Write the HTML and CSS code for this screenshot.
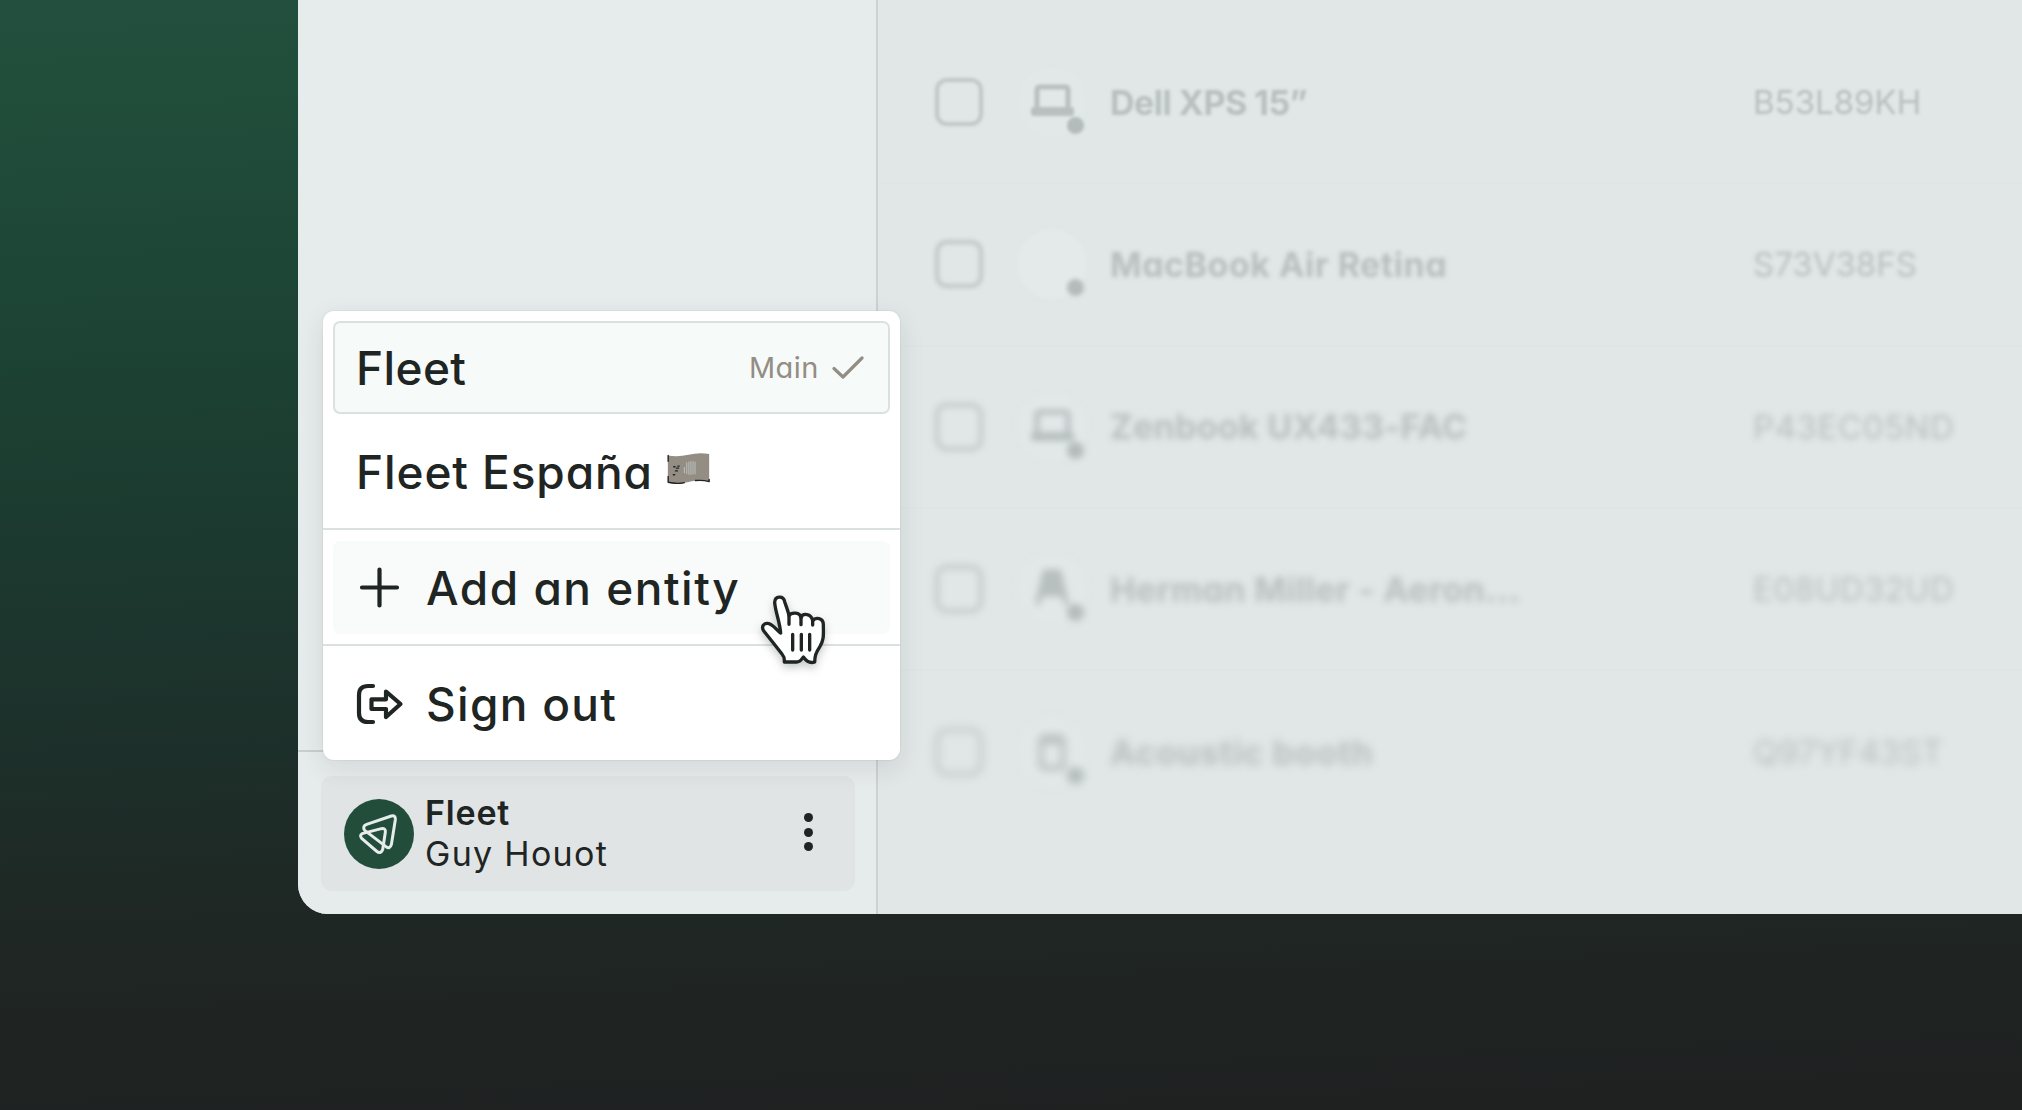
FILE: index.html
```html
<!DOCTYPE html>
<html lang="en">
<head>
  <meta charset="UTF-8" />
  <meta name="viewport" content="width=device-width, initial-scale=1.0" />
  <title>Fleet</title>
  <link rel="stylesheet" href="styles.css">
</head>
<body>
  <div class="app">
    <aside class="sidebar">
      <div class="sidebar-body"></div>
      <div class="sidebar-footer">
        <div class="account">
          <svg class="avatar" viewBox="0 0 210 210">
            <circle cx="105" cy="105" r="105" />
            <path d="M62 94 Q54 81 68 76 L142 51 Q155 48 154 62 L142 137 Q138 151 126 143 Z" />
            <path d="M54 104 L112 89 Q126 87 124 100 L116 152 Q110 167 97 156 L53 118 Q46 109 54 104 Z" />
          </svg>
          <div class="account-text">
            <div class="account-name">Fleet</div>
            <div class="account-user">Guy Houot</div>
          </div>
          <div class="dots"><span></span><span></span><span></span></div>
        </div>
      </div>
    </aside>

    <main class="table">
      <div class="row row-1">
        <span class="checkbox"></span>
        <span class="device">
          <svg viewBox="0 0 70 70"><path class="line" d="M20 41V23q0-3 3-3h25q3 0 3 3v18" /><rect x="14" y="40" width="43" height="9" rx="3" /></svg>
          <i></i>
        </span>
        <span class="name">Dell XPS 15”</span>
        <span class="serial">B53L89KH</span>
      </div>
      <div class="row row-2">
        <span class="checkbox"></span>
        <span class="device light"><i></i></span>
        <span class="name">MacBook Air Retina</span>
        <span class="serial">S73V38FS</span>
      </div>
      <div class="row row-3">
        <span class="checkbox"></span>
        <span class="device">
          <svg viewBox="0 0 70 70"><path class="line" d="M20 41V23q0-3 3-3h25q3 0 3 3v18" /><rect x="14" y="40" width="43" height="9" rx="3" /></svg>
          <i></i>
        </span>
        <span class="name">Zenbook UX433-FAC</span>
        <span class="serial">P43EC05ND</span>
      </div>
      <div class="row row-4">
        <span class="checkbox"></span>
        <span class="device">
          <svg viewBox="0 0 70 70"><path d="M28 16h14l5 24H23z" /><path class="line" d="M28 18h14l5 22H23zM23 38l-2 11M47 38l2 11" /></svg>
          <i></i>
        </span>
        <span class="name">Herman Miller - Aeron...</span>
        <span class="serial">E08UD32UD</span>
      </div>
      <div class="row row-5">
        <span class="checkbox"></span>
        <span class="device">
          <svg viewBox="0 0 70 70"><rect class="line" x="24" y="20" width="22" height="31" rx="3" /><rect x="27" y="18" width="16" height="9" /></svg>
          <i></i>
        </span>
        <span class="name">Acoustic booth</span>
        <span class="serial">Q97YF43ST</span>
      </div>
    </main>
  </div>

  <div class="menu">
    <div class="menu-group">
      <div class="item selected">
        <span>Fleet</span>
        <span class="tag">Main</span>
        <svg class="check" viewBox="0 0 32 24"><path d="M2 12.5 L11 21 L30 2" /></svg>
      </div>
      <div class="item">
        <span class="espana">Fleet España</span>
        <svg class="flag" viewBox="0 0 124 90">
          <path class="cloth" d="M2 7 Q32 12 62 5 Q94 -3 122 3 V83 Q94 76 62 84 Q32 92 2 84 Z" />
          <path class="edge" d="M3 7 V24 M3 68 V85 Q32 91 50 86 M82 80 Q104 78 122 83 V77" />
          <path class="arms" d="M57 28V60M63 26V62M69 25V62M75 25V61M81 26V60M50 42V57" />
          <path class="marks" d="M19 40h4M27 44h6M31 38h4M24 52h6M18 63h4" />
        </svg>
      </div>
    </div>
    <div class="menu-group">
      <div class="item hover">
        <svg class="icon" viewBox="0 0 48 44"><path d="M23.5 3.500V39.500M6 21.500H41" /></svg>
        <span class="entity">Add an entity</span>
      </div>
    </div>
    <div class="menu-group">
      <div class="item">
        <svg class="icon" viewBox="0 0 48 44"><path d="M17 4H12Q3 4 3 13V31Q3 40 12 40H17M15.500 17.300H30V9.500L44.500 22L30 35V27H15.500Z" /></svg>
        <span class="signout">Sign out</span>
      </div>
    </div>
  </div>

  <svg class="cursor" viewBox="0 0 330 300">
    <path class="hand" d="M133 243 Q134 228 126 219 L100 186 L72 151 C62 137 72 126 83 127 C100 129 110 149 122 156 C120 125 106 92 104 64 C105 44 130 43 134 62 C139 78 145 92 147 104 C154 93 180 93 183 110 C188 95 214 97 218 119 C226 108 250 110 250 131 C250 160 253 174 240 196 C226 218 225 224 224 243 C211 248 201 243 190 228 C182 241 176 244 167 243 Z" />
    <path d="M147 104 V130 M183 110 V131 M218 119 V132 M158 160 V207 M184 160 V207 M209 160 V207" />
  </svg>
</body>
</html>
```
FILE: styles.css
```css
:root {
  --ink: #1f2523;
  --muted: #948d84;
  --faded: #b8bfbf;
  --line: #dbe1e1;
}
* {
  box-sizing: border-box;
}
body {
  margin: 0;
  height: 1110px;
  padding-left: 298px;
  overflow: hidden;
  font-family: "Inter", sans-serif;
  font-feature-settings: "cv11";
  color: var(--ink);
  background: linear-gradient(178deg, #23503e 0%, #214d3b 8%, #1c4233 31%, #1c362e 52%, #1d2e29 66%, #1f2724 79%, #1f2322 90%, #1f2121 100%);
}
svg {
  fill: none;
  stroke: var(--ink);
  stroke-linecap: round;
  stroke-linejoin: round;
}
.app {
  display: flex;
  height: 914px;
  background: #e1e6e7;
  border-bottom-left-radius: 30px;
  overflow: hidden;
}
.sidebar {
  width: 580px;
  flex-shrink: 0;
  display: flex;
  flex-direction: column;
  background: #e6eceb;
  border-right: 2px solid #ccd1d2;
}
.sidebar-body {
  flex: 1;
}
.sidebar-footer {
  height: 164px;
  padding: 24px 21px 0 23px;
  border-top: 2px solid #c8cece;
}
.account {
  height: 115px;
  display: flex;
  align-items: center;
  padding: 0 42px 0 23px;
  border-radius: 11px;
  background: #e0e4e5;
}
.avatar {
  width: 70px;
  height: 70px;
  stroke: #e6eceb;
  stroke-width: 9;
}
.avatar circle {
  fill: #224d3b;
  stroke: none;
}
.account-text {
  margin-left: 11px;
  flex: 1;
  line-height: 40.5px;
}
.account-name {
  font-size: 34px;
  font-weight: 600;
  letter-spacing: 0.8px;
}
.account-user {
  font-size: 34px;
  letter-spacing: 1.3px;
}
.dots {
  display: flex;
  flex-direction: column;
  gap: 5.5px;
  margin-top: -3px;
}
.dots span {
  width: 9px;
  height: 9px;
  border-radius: 50%;
  background: var(--ink);
}

.table {
  flex: 1;
  padding-top: 22px;
  color: var(--faded);
}
.row {
  height: 162.3px;
  display: flex;
  align-items: center;
  padding-left: 57px;
  border-bottom: 2px solid #dfe4e5;
  white-space: nowrap;
}
.row > * {
  filter: blur(var(--blur));
}
.row-1 { --blur: 1.6px; }
.row-2 { --blur: 2.3px; }
.row-3 { --blur: 3px; }
.row-4 { --blur: 3.7px; }
.row-5 { --blur: 4.3px; border-bottom: none; }
.checkbox {
  width: 48px;
  height: 48px;
  border: 4px solid #c0c7c7;
  border-radius: 12px;
}
.device {
  position: relative;
  width: 70px;
  height: 70px;
  margin-left: 34px;
  border-radius: 50%;
  background: #e2e7e8;
}
.device.light {
  background: #e4e9e9;
}
.device svg {
  display: block;
  fill: var(--faded);
  stroke: none;
}
.device .line {
  fill: none;
  stroke: var(--faded);
  stroke-width: 5;
}
.device i {
  position: absolute;
  right: 3px;
  bottom: 3px;
  width: 17px;
  height: 17px;
  border-radius: 50%;
  background: #b3bbbb;
}
.name {
  width: 643px;
  margin-left: 23px;
  font-size: 34px;
  font-weight: 700;
}
.serial {
  font-size: 33px;
}
.row-1 .name { letter-spacing: -0.5px; }
.row-2 .name { letter-spacing: 0.5px; }
.row-3 .name { letter-spacing: 0.3px; }
.row-4 .name { letter-spacing: 0.4px; }
.row-5 .name { letter-spacing: 0.8px; }
.row-3 .serial { letter-spacing: 0.6px; }
.row-4 .serial { letter-spacing: 0.3px; }

.menu {
  position: absolute;
  left: 323px;
  top: 311px;
  width: 577px;
  height: 449px;
  border-radius: 11px;
  background: #fff;
  box-shadow: 0 0 0 1px rgba(31, 37, 35, 0.04), 0 8px 26px rgba(31, 37, 35, 0.1);
}
.menu-group {
  padding: 11px 10px 10px;
}
.menu-group:first-child {
  height: 217px;
  padding-top: 10px;
}
.menu-group + .menu-group {
  border-top: 2px solid var(--line);
}
.item {
  height: 93px;
  display: flex;
  align-items: center;
  padding: 0 23px;
  border-radius: 7px;
  font-size: 46px;
  font-weight: 500;
  white-space: nowrap;
}
.item + .item {
  margin-top: 11px;
}
.selected {
  padding: 0 24px 0 21px;
  border: 2px solid var(--line);
  background: #f6faf9;
  letter-spacing: 0.4px;
}
.hover {
  background: #f8fbfa;
}
.tag {
  margin-left: auto;
  font-size: 29px;
  font-weight: 400;
  letter-spacing: 0.5px;
  color: var(--muted);
}
.check {
  width: 32px;
  height: 24px;
  margin-left: 13px;
  stroke: var(--muted);
  stroke-width: 3.2;
}
.espana {
  letter-spacing: 0.9px;
}
.flag {
  width: 43px;
  height: 31px;
  margin: -7px 0 0 14px;
}
.flag .cloth {
  fill: #948d84;
  stroke: none;
}
.flag .edge {
  stroke-width: 4;
}
.flag .arms {
  stroke: #b9bfbc;
  stroke-width: 3;
}
.flag .marks {
  stroke-width: 4;
}
.icon {
  width: 48px;
  height: 44px;
  stroke-width: 4.2;
}
.entity {
  margin-left: 22px;
  letter-spacing: 1.5px;
}
.signout {
  margin-left: 22px;
  letter-spacing: 1.3px;
}

.cursor {
  position: absolute;
  left: 740px;
  top: 581px;
  width: 110px;
  height: 100px;
  stroke-width: 10;
  filter: drop-shadow(0 4px 4px rgba(31, 37, 35, 0.25));
}
.hand {
  fill: #fff;
}
```
